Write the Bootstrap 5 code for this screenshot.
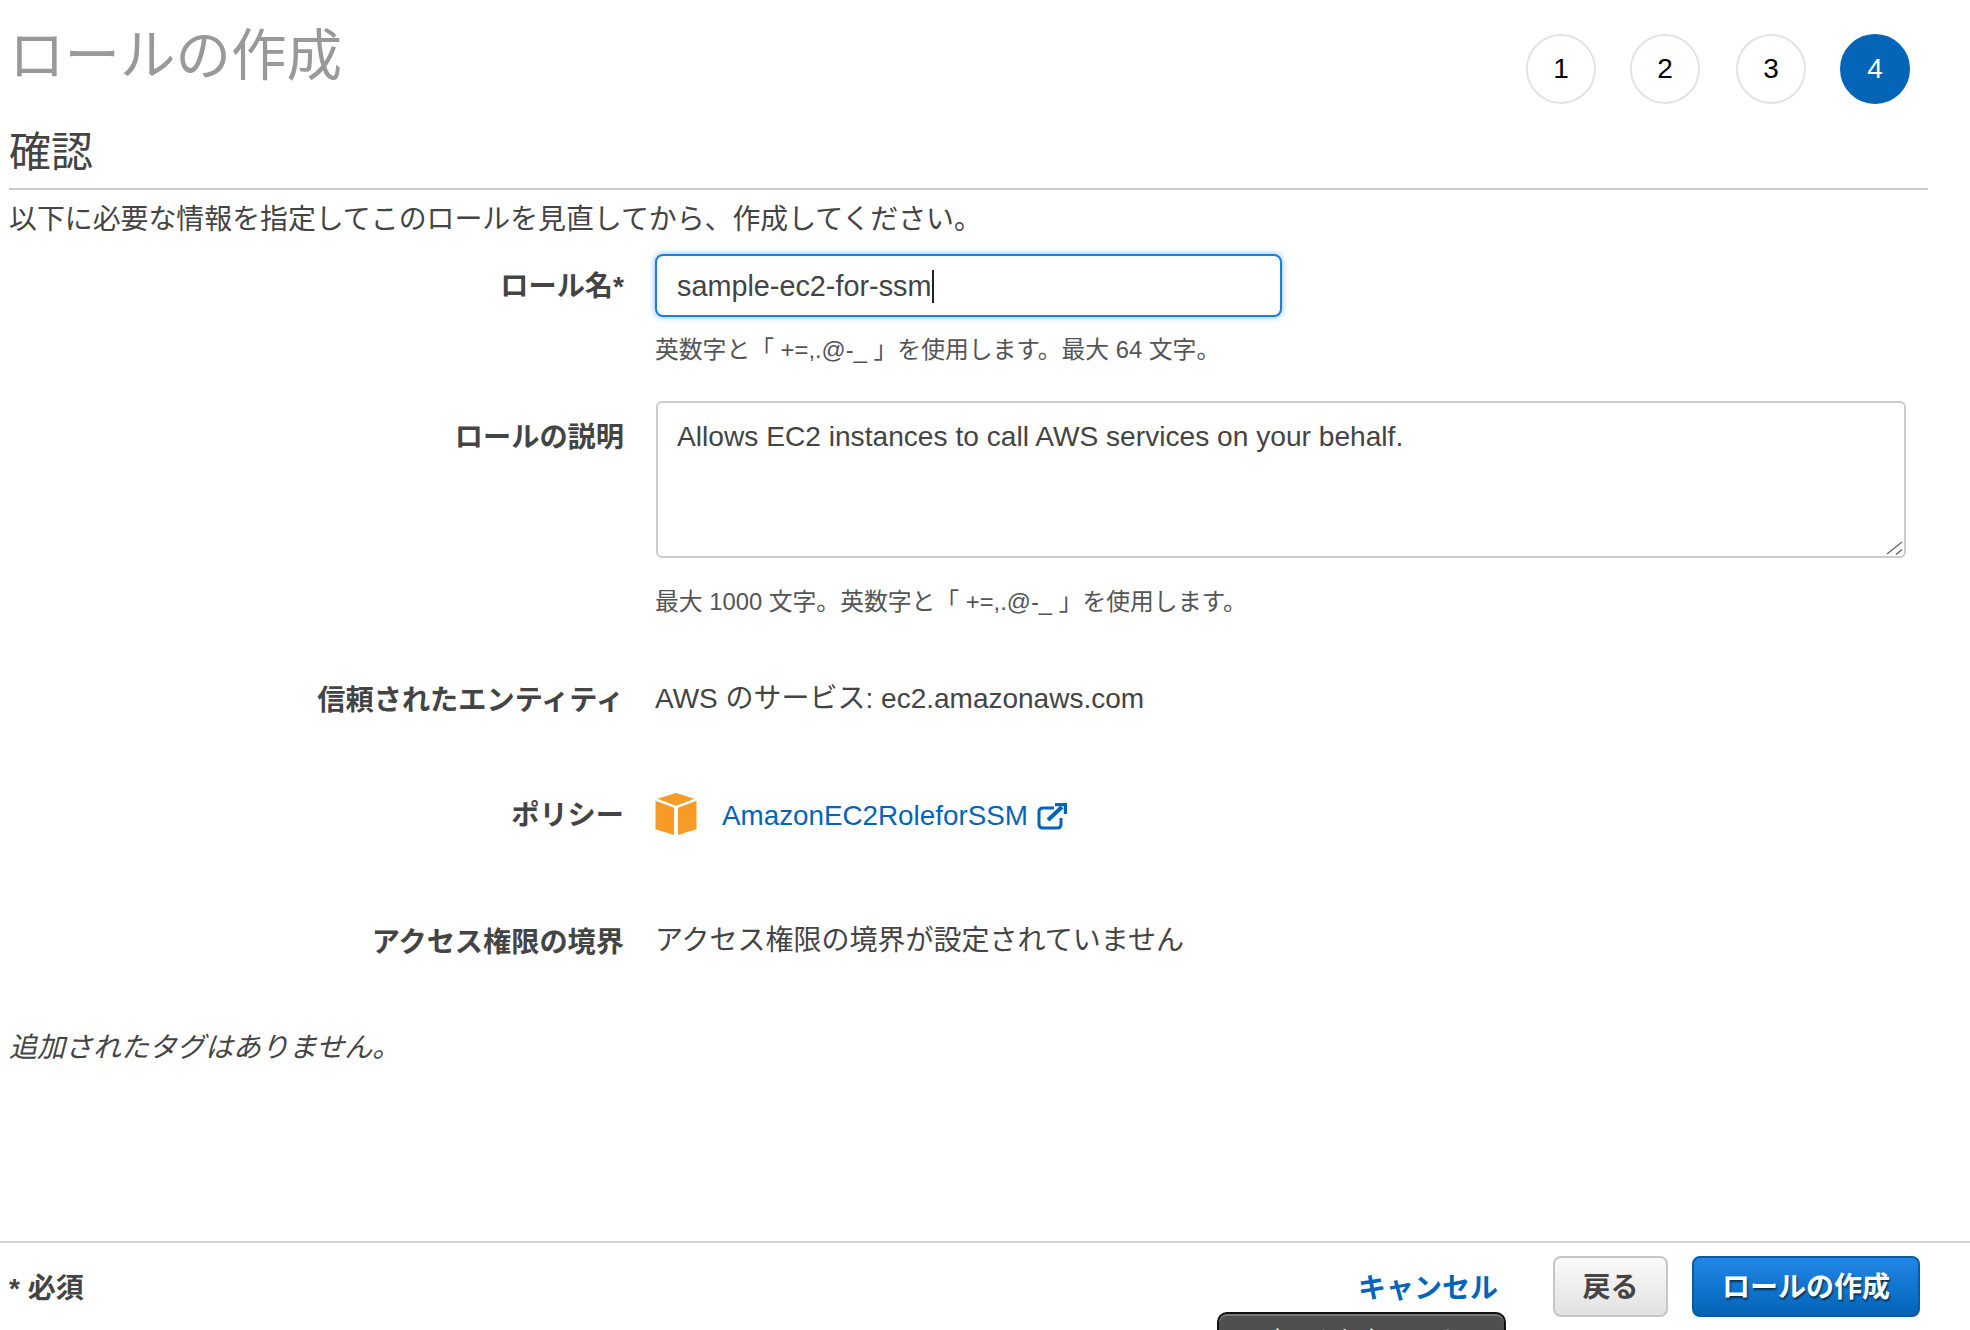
<!DOCTYPE html>
<html lang="ja">
<head>
    <meta charset="utf-8">
    <title>ロールの作成</title>
    <link rel="stylesheet" href="https://cdn.jsdelivr.net/npm/bootstrap@5.3.0/dist/css/bootstrap.min.css">
    <style>
        html, body { height: 1330px; overflow: hidden; }
        body { font-family: "Liberation Sans", "Noto Sans CJK JP", sans-serif; color: #444; font-size: 28px; background: #fff; }
        .wiz-page { height: 1241px; padding: 0 42px 0 9px; }
        .wiz-head { height: 123px; padding-top: 34px; }
        .wiz-title { font-size: 55.5px; line-height: 1; color: #999; font-weight: 400; margin: -5px 0 0 0; }
        .wiz-steps { gap: 34px; margin-right: 18px; }
        .wiz-step { width: 70px; height: 70px; border: 2px solid #e3e3e3; color: #000; font-size: 28px; }
        .wiz-step.is-wide { margin-left: 2px; }
        .wiz-step.is-active { background: #0364b8; border-color: #0364b8; color: #fff; }
        .wiz-sub { font-size: 42px; line-height: 1; font-weight: 400; color: #444; height: 67px; border-bottom: 2px solid #ccc; margin: 0; padding-top: 9px; }
        .wiz-intro { font-size: 27.9px; line-height: 38px; margin: 11px 0 15px; }
        .form-line { gap: 31px; }
        .line-label { width: 615px; flex: none; text-align: right; font-weight: 700; font-size: 28.2px; padding-top: 2px; }
        .line-body { flex: 1; min-width: 0; }
        .name-input.form-control { width: 627px; height: 63px; border: 2px solid #1a7fdc; border-radius: 8px; padding: 2px 20px 0; font-size: 28.8px; color: #444; box-shadow: 0 0 6px rgba(26,127,220,.55); }
        .caret-bar { display: inline-block; width: 2px; height: 33px; background: #222; margin-left: 1px; }
        .desc-wrap { width: 1250px; margin-left: 1px; position: relative; }
        .desc-input.form-control { display: block; height: 157px; width: 100%; border: 2px solid #ccc; border-radius: 6px; padding: 15px 19px; font-size: 28.15px; line-height: 38px; color: #444; resize: none; }
        .desc-grip { position: absolute; right: 2px; bottom: 2px; }
        .help-line { font-size: 23.8px; line-height: 34px; color: #555; }
        .plain-value { font-size: 28px; line-height: 40px; }
        .policy-link { color: #0364b8; text-decoration: none; font-size: 27.8px; margin-top: 4px; margin-left: 25px; }
        .ext-icon { margin-top: 4px; margin-left: 9px; }
        .no-tags { font-style: italic; font-size: 28px; line-height: 38px; }
        .wiz-foot { height: 89px; border-top: 2px solid #d5d5d5; padding: 0 50px 0 9px; position: relative; }
        .req-note { font-weight: 700; font-size: 28px; padding-top: 4px; }
        .cancel-link { color: #0364b8; font-weight: 700; font-size: 28px; text-decoration: none; margin-right: 55px; padding-top: 4px; }
        .btn-back.btn { width: 115px; height: 61px; border: 2px solid #c6c6c6; border-radius: 8px; background: linear-gradient(#fafafa, #e2e2e2); color: #444; font-weight: 700; font-size: 28px; padding: 3px 0 0; margin-right: 24px; }
        .btn-create.btn { width: 228px; height: 61px; border: 2px solid #0a5ba3; border-radius: 8px; background: linear-gradient(#2187e6, #0364b8); color: #fff; font-weight: 700; font-size: 28px; padding: 3px 0 0; text-shadow: 1px 2px 2px rgba(0,0,0,.6); }
        .cut-tip { position: absolute; left: 1217px; top: 69px; width: 289px; height: 60px; background: #4f4f4f; border: 2px solid #111; border-radius: 10px; box-shadow: inset 0 2px 0 #777; color: #fff; font-size: 24px; text-align: center; padding-top: 9px; }
    </style>
</head>
<body>
    <div class="wiz-page">
        <div class="wiz-head d-flex justify-content-between align-items-start">
            <h1 class="wiz-title">ロールの作成</h1>
            <div class="wiz-steps d-flex">
                <div class="wiz-step rounded-circle d-flex align-items-center justify-content-center">1</div>
                <div class="wiz-step rounded-circle d-flex align-items-center justify-content-center">2</div>
                <div class="wiz-step is-wide rounded-circle d-flex align-items-center justify-content-center">3</div>
                <div class="wiz-step is-active rounded-circle d-flex align-items-center justify-content-center">4</div>
            </div>
        </div>
        <h2 class="wiz-sub">確認</h2>
        <p class="wiz-intro">以下に必要な情報を指定してこのロールを見直してから、作成してください。</p>

        <div class="form-line d-flex align-items-center">
            <div class="line-label">ロール名*</div>
            <div class="line-body">
                <div class="name-input form-control d-flex align-items-center"><span>sample-ec2-for-ssm</span><span class="caret-bar"></span></div>
            </div>
        </div>
        <div class="form-line d-flex">
            <div class="line-label"></div>
            <div class="line-body help-line" style="margin-top:16px">英数字と「 +=,.@-_ 」を使用します。最大 64 文字。</div>
        </div>

        <div class="form-line d-flex" style="margin-top:34px">
            <div class="line-label" style="padding-top:15px">ロールの説明</div>
            <div class="line-body">
                <div class="desc-wrap">
                    <textarea class="desc-input form-control">Allows EC2 instances to call AWS services on your behalf.</textarea>
                    <svg class="desc-grip" width="20" height="16" viewBox="0 0 20 16" fill="none" stroke="#666" stroke-width="1.5">
                        <path d="M3 14 L18 2"/>
                        <path d="M12 14.5 L18 9.5"/>
                    </svg>
                </div>
            </div>
        </div>
        <div class="form-line d-flex">
            <div class="line-label"></div>
            <div class="line-body help-line" style="margin-top:27px">最大 1000 文字。英数字と「 +=,.@-_ 」を使用します。</div>
        </div>

        <div class="form-line d-flex align-items-center" style="margin-top:58px">
            <div class="line-label">信頼されたエンティティ</div>
            <div class="line-body plain-value">AWS のサービス: ec2.amazonaws.com</div>
        </div>

        <div class="form-line d-flex align-items-center" style="margin-top:70px">
            <div class="line-label">ポリシー</div>
            <div class="line-body d-flex align-items-center">
                <svg width="42" height="42" viewBox="0 0 42 43">
                    <path d="M21 0 L40 6 L21 13 L2 6Z" fill="#f79b26"/>
                    <path d="M0 8 L19 15 V43 L0 37Z" fill="#f79b26"/>
                    <path d="M42 8 L23 15 V43 L42 37Z" fill="#f79b26"/>
                </svg>
                <a class="policy-link" href="#">AmazonEC2RoleforSSM</a>
                <svg class="ext-icon" width="30" height="27" viewBox="0 0 30 27" fill="none" stroke="#0364b8" stroke-width="3">
                    <path d="M17 5 H6 Q2 5 2 9 V21 Q2 25 6 25 H20 Q24 25 24 21 V15"/>
                    <path d="M11 17 L25 4" stroke-width="4"/>
                    <path d="M18 1.5 H28.5 V11" stroke-width="3.4"/>
                </svg>
            </div>
        </div>

        <div class="form-line d-flex align-items-center" style="margin-top:82px">
            <div class="line-label">アクセス権限の境界</div>
            <div class="line-body plain-value">アクセス権限の境界が設定されていません</div>
        </div>

        <p class="no-tags" style="margin-top:66px">追加されたタグはありません。</p>
    </div>

    <div class="wiz-foot d-flex align-items-center">
        <div class="req-note flex-grow-1">* 必須</div>
        <a class="cancel-link" href="#">キャンセル</a>
        <button class="btn-back btn" type="button">戻る</button>
        <button class="btn-create btn" type="button">ロールの作成</button>
        <div class="cut-tip">変更を保存します</div>
    </div>
    <script src="https://cdn.jsdelivr.net/npm/bootstrap@5.3.0/dist/js/bootstrap.bundle.min.js"></script>
</body>
</html>
